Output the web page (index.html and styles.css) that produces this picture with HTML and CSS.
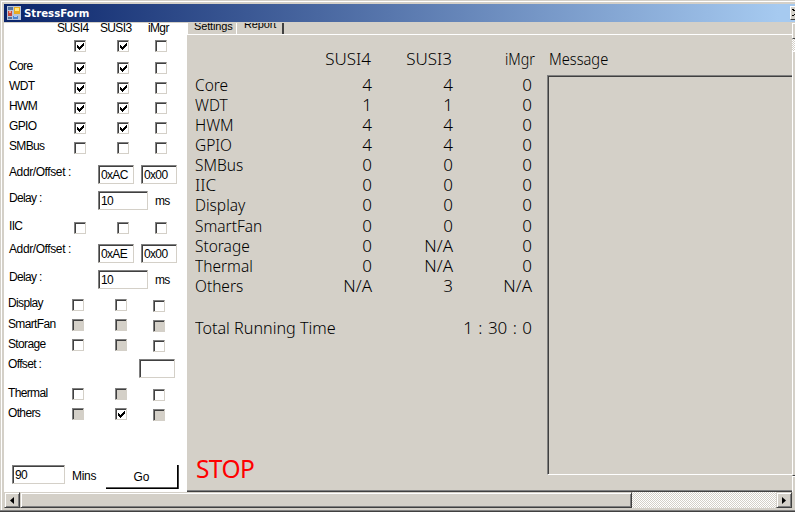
FILE: index.html
```html
<!DOCTYPE html>
<html lang="en">
<head>
<meta charset="utf-8">
<title>StressForm</title>
<link rel="stylesheet" href="styles.css">
</head>
<body>
<svg class="defs" width="0" height="0"><symbol id="tick" viewBox="0 0 12 12"><path d="M3 5h1v1h1v1h1v-1h1v-1h1v-1h1v-1h1v3h-1v1h-1v1h-1v1h-1v1h-1v-1h-1v-1h-1z"/></symbol></svg>
<div class="window">
  <header class="titlebar">
    <svg class="appicon" width="14" height="14" viewBox="0 0 14 14" shape-rendering="crispEdges"><path fill="#b8c4d8" d="M0 0h14v14H0z"/><path fill="#53719e" d="M1 1h5v3H1zM1 11h4v2H1z"/><path fill="#c8473a" d="M1 5h4v5H1z"/><path fill="#f7a08e" d="M2 5h2v2H2z"/><path fill="#e8ac20" d="M7 1h6v7H7z"/><path fill="#ffe680" d="M8 2h4v3H8z"/><path fill="#4d86d0" d="M6 10h5v3H6z"/><path fill="#a8d0ff" d="M7 10h3v1H7z"/></svg>
    <span class="title">StressForm</span>
    <span class="close"><svg width="3" height="8" viewBox="0 0 3 8"><path d="M0 0h2v1h1v1H1V1H0zM0 7h2V6h1V5H2v1H0z"/></svg></span>
  </header>
  <div class="client">
    <section class="options">
      <div class="row head"><span>SUSI4</span><span>SUSI3</span><span>iMgr</span></div>
      <div class="row checks h22"><span></span><i class="cb"><svg><use href="#tick"/></svg></i><i class="cb"><svg><use href="#tick"/></svg></i><i class="cb"></i></div>
      <div class="row checks"><span>Core</span><i class="cb"><svg><use href="#tick"/></svg></i><i class="cb"><svg><use href="#tick"/></svg></i><i class="cb"></i></div>
      <div class="row checks"><span>WDT</span><i class="cb"><svg><use href="#tick"/></svg></i><i class="cb"><svg><use href="#tick"/></svg></i><i class="cb"></i></div>
      <div class="row checks"><span>HWM</span><i class="cb"><svg><use href="#tick"/></svg></i><i class="cb"><svg><use href="#tick"/></svg></i><i class="cb"></i></div>
      <div class="row checks"><span>GPIO</span><i class="cb"><svg><use href="#tick"/></svg></i><i class="cb"><svg><use href="#tick"/></svg></i><i class="cb"></i></div>
      <div class="row checks h26"><span>SMBus</span><i class="cb"></i><i class="cb"></i><i class="cb"></i></div>
      <div class="row fields h26"><span class="addr">Addr/Offset :</span><b class="field">0xAC</b><b class="field">0x00</b></div>
      <div class="row delay h28"><span>Delay :</span><b class="field">10</b><span class="unit">ms</span></div>
      <div class="row checks h23"><span>IIC</span><i class="cb"></i><i class="cb"></i><i class="cb"></i></div>
      <div class="row fields h28 drop"><span class="addr">Addr/Offset :</span><b class="field">0xAE</b><b class="field">0x00</b></div>
      <div class="row delay h26"><span>Delay :</span><b class="field">10</b><span class="unit">ms</span></div>
      <div class="row checks low h21"><span>Display</span><i class="cb"></i><i class="cb"></i><i class="cb"></i></div>
      <div class="row checks low up"><span>SmartFan</span><i class="cb off"></i><i class="cb off"></i><i class="cb off"></i></div>
      <div class="row checks low up"><span>Storage</span><i class="cb"></i><i class="cb off"></i><i class="cb"></i></div>
      <div class="row offset h29 drop"><span>Offset :</span><b class="field"></b></div>
      <div class="row checks low up"><span>Thermal</span><i class="cb"></i><i class="cb off"></i><i class="cb"></i></div>
      <div class="row checks low up h59"><span>Others</span><i class="cb off"></i><i class="cb"><svg><use href="#tick"/></svg></i><i class="cb off"></i></div>
      <div class="row run"><b class="field">90</b><span class="mins">Mins</span><span class="button">Go</span></div>
    </section>
    <section class="tabs">
      <div class="tabstrip"><span class="tab"><span>Settings</span></span><span class="tab active"><span>Report</span></span></div>
      <div class="page">
        <div class="report">
          <div class="line heads"><span></span><span>SUSI4</span><span>SUSI3</span><span class="imgr">iMgr</span></div>
          <div class="line"><span>Core</span><span>4</span><span>4</span><span>0</span></div>
          <div class="line"><span>WDT</span><span>1</span><span>1</span><span>0</span></div>
          <div class="line"><span>HWM</span><span>4</span><span>4</span><span>0</span></div>
          <div class="line"><span>GPIO</span><span>4</span><span>4</span><span>0</span></div>
          <div class="line"><span>SMBus</span><span>0</span><span>0</span><span>0</span></div>
          <div class="line"><span class="wide">IIC</span><span>0</span><span>0</span><span>0</span></div>
          <div class="line tall"><span>Display</span><span>0</span><span>0</span><span>0</span></div>
          <div class="line"><span>SmartFan</span><span>0</span><span>0</span><span>0</span></div>
          <div class="line"><span>Storage</span><span>0</span><span>N/A</span><span>0</span></div>
          <div class="line"><span>Thermal</span><span>0</span><span>N/A</span><span>0</span></div>
          <div class="line"><span>Others</span><span>N/A</span><span>3</span><span>N/A</span></div>
          <div class="total"><span class="caption">Total Running Time</span><span class="time">1 : 30 : 0</span></div>
          <div class="stop">STOP</div>
        </div>
        <div class="messages"><span class="msgtitle">Message</span><div class="msgbox"></div></div>
      </div>
    </section>
    <div class="vscroll"><div class="vbtn"></div><div class="vtrack"></div><div class="vthumb"></div><div class="vbtn end"></div></div>
  </div>
  <div class="hscroll">
    <span class="arrow"><svg width="4" height="7" viewBox="0 0 4 7"><path d="M4 0v7L0 3.5z"/></svg></span>
    <span class="thumb"></span><span class="track"></span>
    <span class="arrow"><svg width="4" height="7" viewBox="0 0 4 7"><path d="M0 0v7l4-3.5z"/></svg></span>
  </div>
</div>
</body>
</html>
```

FILE: styles.css
```css
* { box-sizing: border-box; }
body { margin: 0; width: 795px; height: 512px; overflow: hidden; background: #d4d0c8; color: #000; }
.defs { display: block; }
.window { width: 795px; height: 512px; padding: 1px 0 0 1px; background: #d4d0c8; border-bottom: 1px solid #404040; box-shadow: inset 0 -1px #808080, inset 1px 1px #d4d0c8, inset 2px 2px #fff; display: flex; flex-direction: column; }
.titlebar { height: 18px; margin: 3px 0 0 3px; flex: none; display: flex; align-items: center; background: linear-gradient(90deg, #0a246a, #a6caf0 98%); }
.appicon { margin: 0 0 0 3px; }
.title { margin-left: 3px; flex: 1; color: #fff; font: bold 11.3px/18px "DejaVu Sans Condensed", "DejaVu Sans", sans-serif; padding-top: 1px; }
.close { width: 5px; height: 14px; background: #d4d0c8; border-left: 1px solid #fff; border-top: 1px solid #fff; border-bottom: 1px solid #404040; display: flex; align-items: center; justify-content: flex-end; }

.client { height: 469px; margin: 1px 0 0 3px; flex: none; display: flex; overflow: hidden; }
.options { width: 183px; background: #fff; overflow: hidden; flex: none; font: 12px/14px "Liberation Sans", Arial, sans-serif; letter-spacing: -0.65px; white-space: nowrap; }
.addr { letter-spacing: -0.4px; }
.row { display: grid; height: 20px; padding-left: 5px; align-items: start; justify-content: start; }
.head { height: 15px; padding-left: 53px; margin-top: -1px; grid-template-columns: 43px 48px 30px; }
.head span { line-height: 12px; }
.checks { grid-template-columns: 65px 43px 38px 12px; }
.low { padding-left: 4px; grid-template-columns: 64px 43px 38px 12px; }
.fields { grid-template-columns: 89px 43px 36px; }
.delay { grid-template-columns: 89px 57px 20px; }
.delay .field { width: 50px; }
.offset { padding-left: 4px; grid-template-columns: 131px 36px; }
.run { height: 25px; padding-left: 8px; grid-template-columns: 60px 34px 73px; }
.run .field { width: 53px; }
.h21 { height: 21px; } .h22 { height: 22px; } .h23 { height: 23px; } .h26 { height: 26px; } .h28 { height: 28px; } .h29 { height: 29px; } .h59 { height: 59px; }
.cb { width: 12px; height: 12px; margin-top: 3px; background: #fff; border: 1px solid; border-color: #808080 #d4d0c8 #d4d0c8 #808080; box-shadow: inset 1px 1px #404040; }
.cb svg { display: block; width: 12px; height: 12px; margin: -1px; shape-rendering: crispEdges; }
.up .cb { margin-top: 2px; }
.low .cb:last-child { margin-top: 4px; }
.up .cb:last-child { margin-top: 3px; }
.off { background: #d4d0c8; }
.field { width: 36px; height: 19px; padding-left: 2px; font-weight: normal; line-height: 18px; background: #fff; border: 1px solid; border-color: #808080 #d4d0c8 #d4d0c8 #808080; box-shadow: inset 1px 1px #404040; }
.drop .field { margin-top: 2px; }
.unit { padding-top: 3px; }
.mins { padding-top: 4px; letter-spacing: -0.3px; }
.button { width: 72px; height: 24px; line-height: 24px; text-align: center; letter-spacing: 0; border-right: 1px solid #000; border-bottom: 1px solid #000; box-shadow: 1px 0 #404040, inset 0 -1px #606060; }

.tabs { width: 605px; flex: none; display: flex; flex-direction: column; font: 11px/12px "Liberation Sans", Arial, sans-serif; }
.tabstrip { height: 12px; display: flex; overflow: hidden; border-bottom: 1px solid #fff; }
.tab { width: 50px; height: 11px; padding-left: 6px; border-left: 1px solid #fff; border-right: 1px solid #fff; }
.tab span { display: block; margin-top: -3px; letter-spacing: -0.15px; }
.active { width: 47px; height: 12px; border-left: 0; border-right: 2px solid #404040; background: #d4d0c8; }
.tab.active span { margin-top: -5px; padding-left: 1px; }
.page { height: 457px; display: flex; border-bottom: 1px solid #404040; box-shadow: inset 0 -1px #808080; font: 300 17px/20px "Noto Sans", "Open Sans", sans-serif; white-space: nowrap; }
.report { width: 360px; padding: 14px 0 0 8px; }
.line { display: grid; grid-template-columns: 97px 80px 81px 79px; height: 20px; }
.line span + span { text-align: right; }
.line span:first-child { transform: scaleX(0.91); transform-origin: left; }
.line .wide:first-child { transform: none; }
.line .imgr { transform: scaleX(0.84); transform-origin: right; }
.heads { height: 26px; grid-template-columns: 97px 79px 81px 83px; }
.tall { height: 21px; }
.total { height: 20px; margin-top: 22px; width: 337px; display: flex; justify-content: space-between; }
.caption { transform: scaleX(0.95); transform-origin: left; }
.time { word-spacing: 1px; }
.stop { margin-top: 117px; padding-left: 1px; color: #f00; font: 400 24.5px/28px "Noto Sans", sans-serif; letter-spacing: -0.6px; }
.messages { width: 245px; padding-top: 14px; }
.msgtitle { display: block; padding-left: 2px; transform: scaleX(0.86); transform-origin: 2px 50%; }
.msgbox { margin-top: 6px; height: 400px; border-top: 1px solid #808080; border-left: 1px solid #808080; border-bottom: 1px solid #fff; box-shadow: inset 1px 1px #404040; }
.vscroll { width: 4px; display: flex; flex-direction: column; }
.vbtn { height: 16px; border-left: 1px solid #fff; border-top: 1px solid #fff; border-bottom: 1px solid #404040; }
.vtrack { height: 12px; background: repeating-conic-gradient(#fff 0 25%, #d4d0c8 0 50%) 0 0 / 2px 2px; }
.vthumb { flex: 1; border-left: 1px solid #fff; border-top: 1px solid #fff; border-bottom: 1px solid #404040; }
.end { border-bottom: 0; }

.hscroll { height: 16px; margin-left: 3px; flex: none; display: flex; }
.arrow { width: 16px; height: 16px; display: flex; align-items: center; justify-content: center; border: 1px solid; border-color: #d4d0c8 #404040 #404040 #d4d0c8; box-shadow: inset 1px 1px #fff, inset -1px -1px #808080; }
.thumb { width: 612px; border: 1px solid; border-color: #d4d0c8 #404040 #404040 #d4d0c8; box-shadow: inset 1px 1px #fff, inset -1px -1px #808080; }
.track { width: 144px; background: repeating-conic-gradient(#fff 0 25%, #d4d0c8 0 50%) 0 0 / 2px 2px; }
```
